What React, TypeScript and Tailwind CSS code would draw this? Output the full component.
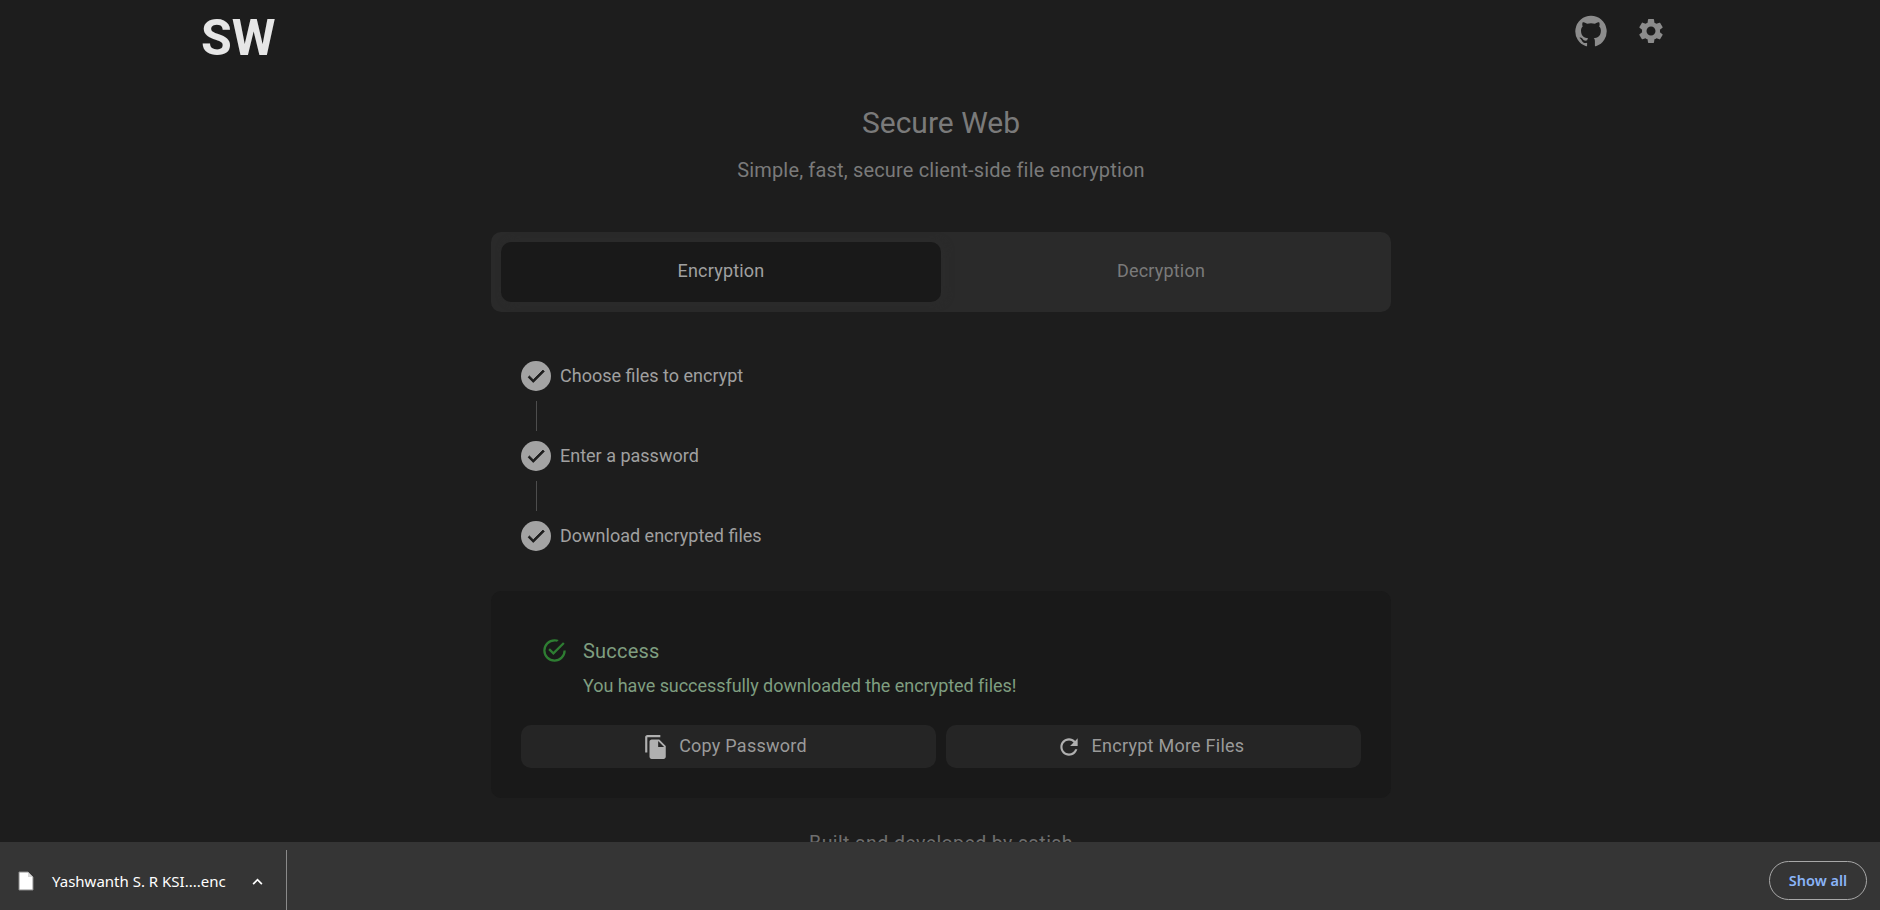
import React from 'react';

const Icon: React.FC<{ d: string; className?: string }> = ({ d, className }) => (
  <svg viewBox="0 0 24 24" fill="currentColor" className={className}>
    <path d={d} />
  </svg>
);

const githubPath = 'M12 1.27a11 11 0 00-3.48 21.46c.55.09.73-.28.73-.55v-1.84c-3.03.64-3.67-1.46-3.67-1.46-.55-1.29-1.28-1.65-1.28-1.65-.92-.65.1-.65.1-.65 1.1 0 1.73 1.1 1.73 1.1.92 1.65 2.57 1.2 3.21.92a2 2 0 01.64-1.47c-2.47-.27-5.04-1.19-5.04-5.5 0-1.1.46-2.1 1.2-2.84a3.76 3.76 0 010-2.93s.91-.28 3.11 1.1c1.8-.49 3.7-.49 5.5 0 2.1-1.38 3.02-1.1 3.02-1.1a3.76 3.76 0 010 2.93c.83.74 1.2 1.74 1.2 2.94 0 4.21-2.57 5.13-5.04 5.4.45.37.82.92.82 2.02v3.03c0 .27.1.64.73.55A11 11 0 0012 1.27';
const settingsPath = 'M19.14 12.94c.04-.3.06-.61.06-.94 0-.32-.02-.64-.07-.94l2.03-1.58c.18-.14.23-.41.12-.61l-1.92-3.32c-.12-.22-.37-.29-.59-.22l-2.39.96c-.5-.38-1.03-.7-1.62-.94l-.36-2.54c-.04-.24-.24-.41-.48-.41h-3.84c-.24 0-.43.17-.47.41l-.36 2.54c-.59.24-1.13.57-1.62.94l-2.39-.96c-.22-.08-.47 0-.59.22L2.74 8.87c-.12.21-.08.47.12.61l2.03 1.58c-.05.3-.09.63-.09.94s.02.64.07.94l-2.03 1.58c-.18.14-.23.41-.12.61l1.92 3.32c.12.22.37.29.59.22l2.39-.96c.5.38 1.03.7 1.62.94l.36 2.54c.05.24.24.41.48.41h3.84c.24 0 .44-.17.47-.41l.36-2.54c.59-.24 1.13-.56 1.62-.94l2.39.96c.22.08.47 0 .59-.22l1.92-3.32c.12-.22.07-.47-.12-.61l-2.01-1.58zM12 15.6c-1.98 0-3.6-1.62-3.6-3.6s1.62-3.6 3.6-3.6 3.6 1.62 3.6 3.6-1.62 3.6-3.6 3.6z';
const checkPath = 'M9 16.17L4.83 12l-1.42 1.41L9 19 21 7l-1.41-1.41z';
const successPath = 'M20 12a8 8 0 0 1-8 8 8 8 0 0 1-8-8 8 8 0 0 1 8-8c.76 0 1.5.11 2.2.31l1.57-1.57A9.822 9.822 0 0 0 12 2 10 10 0 0 0 2 12a10 10 0 0 0 10 10 10 10 0 0 0 10-10M7.91 10.08 6.5 11.5 11 16 21 6l-1.41-1.42L11 13.17l-3.09-3.09z';
const copyPath = 'M16 1H4c-1.1 0-2 .9-2 2v14h2V3h12V1zm-1 4l6 6v10c0 1.1-.9 2-2 2H7.99C6.89 23 6 22.1 6 21l.01-14c0-1.1.89-2 1.99-2h7zm-1 7h5.5L14 6.5V12z';
const refreshPath = 'M17.65 6.35C16.2 4.9 14.21 4 12 4c-4.42 0-7.99 3.58-7.99 8s3.57 8 7.99 8c3.73 0 6.84-2.55 7.73-6h-2.08c-.82 2.33-3.04 4-5.65 4-3.31 0-6-2.69-6-6s2.69-6 6-6c1.66 0 3.14.69 4.22 1.78L13 11h7V4l-2.35 2.35z';

const steps = ['Choose files to encrypt', 'Enter a password', 'Download encrypted files'];

const App: React.FC = () => {
  return (
    <div className="h-screen flex flex-col overflow-hidden bg-[#1d1d1d] font-['Roboto',sans-serif]">
      <main className="h-[842px] shrink-0 overflow-hidden">
        <header className="h-[74px] pl-[201px] pr-[214px] flex items-start justify-between">
          <div className="pt-[8px] text-[50px] leading-[60px] font-bold text-[#e6e6e6]">SW</div>
          <div className="pt-[14px] flex items-center gap-[28px] text-[#8c8c8c]">
            <Icon d={githubPath} className="w-[34px] h-[34px]" />
            <Icon d={settingsPath} className="w-[30px] h-[30px]" />
          </div>
        </header>

        <div className="w-[900px] ml-[491px]">
          <div className="text-center">
            <h1 className="pt-[31px] text-[30px] leading-[36px] text-[#7a7a7a]">Secure Web</h1>
            <p className="mt-[15px] text-[20px] leading-[28px] tracking-[0.16px] text-[#7a7a7a]">Simple, fast, secure client-side file encryption</p>
          </div>

          <div className="mt-[48px] h-[80px] p-[10px] flex rounded-[10px] bg-[#2a2a2a]">
            <div className="w-[440px] pb-[4px] flex items-center justify-center rounded-[10px] bg-[#191919] text-[18px] tracking-[0.2px] text-[#a0a0a0] shadow-[4px_0_8px_#2c2c2c]">Encryption</div>
            <div className="flex-1 pb-[4px] flex items-center justify-center text-[18px] tracking-[0.2px] text-[#7a7a7a]">Decryption</div>
          </div>

          <div className="mt-[49px] pl-[30px]">
            {steps.map((step, i) => (
              <div key={step}>
                <div className="h-[30px] flex items-center gap-[9px]">
                  <div className="w-[30px] h-[30px] rounded-full bg-[#a3a3a3] flex items-center justify-center text-[#1d1d1d]">
                    <Icon d={checkPath} className="w-[22px] h-[22px] stroke-current stroke-1" />
                  </div>
                  <span className="pb-[2px] text-[18px] text-[#a0a0a0]">{step}</span>
                </div>
                {i < steps.length - 1 && <div className="ml-[15px] my-[10px] w-px h-[30px] bg-[#4d4d4d]" />}
              </div>
            ))}
          </div>

          <section className="mt-[40px] h-[207px] rounded-[10px] bg-[#191919] px-[30px] pt-[46px]">
            <div className="pl-[20px] flex items-center gap-[15px]">
              <Icon d={successPath} className="w-[27px] h-[27px] text-[#2e7d32]" />
              <span className="text-[20px] leading-[24px] tracking-[0.2px] text-[#7f9e80]">Success</span>
            </div>
            <p className="mt-[10px] pl-[62px] text-[18px] leading-[24px] tracking-[-0.05px] text-[#7f9e80]">You have successfully downloaded the encrypted files!</p>
            <div className="mt-[27px] flex gap-[10px]">
              <button className="flex-1 h-[43px] pr-[7px] rounded-[10px] bg-[#252525] flex items-center justify-center gap-[10px] text-[18px] tracking-[0.25px] text-[#9a9a9a]">
                <Icon d={copyPath} className="w-[26px] h-[26px] text-[#b0b0b0]" />
                <span className="pb-[2px]">Copy Password</span>
              </button>
              <button className="flex-1 h-[43px] pr-[7px] rounded-[10px] bg-[#252525] flex items-center justify-center gap-[10px] text-[18px] tracking-[0.25px] text-[#9a9a9a]">
                <Icon d={refreshPath} className="w-[26px] h-[26px] text-[#b0b0b0]" />
                <span className="pb-[2px]">Encrypt More Files</span>
              </button>
            </div>
          </section>

          <footer className="mt-[31px] text-center text-[19.5px] tracking-[0.4px] text-[#6e6e6e]">Built and developed by satish</footer>
        </div>
      </main>

      <div className="h-[68px] shrink-0 bg-[#353535] flex font-['Noto_Sans',sans-serif]">
        <div className="w-[286px] flex items-center pl-[18px] pt-[10px]">
          <svg viewBox="0 0 16 20" className="w-[16px] h-[20px]">
            <path d="M1 1h9l5 5v13H1z" fill="#fff" stroke="#8a8a8a" strokeWidth="1" />
            <path d="M10 1v5h5" fill="#d8d8d8" />
          </svg>
          <span className="ml-[18px] text-[15px] text-white whitespace-nowrap">Yashwanth S. R KSI....enc</span>
          <svg viewBox="0 0 12 8" className="ml-[26px] w-[11px] h-[7px]">
            <path d="M1 7l5-5 5 5" fill="none" stroke="#fff" strokeWidth="2" />
          </svg>
        </div>
        <div className="mt-[8px] w-px bg-[#8a8a8a]" />
        <div className="ml-auto mr-[13px] mt-[19px] w-[98px] h-[39px] rounded-full border border-[#a8a8a8] flex items-center justify-center text-[14.5px] font-semibold text-[#8ab4f8]">Show all</div>
      </div>
    </div>
  );
};

export default App;
